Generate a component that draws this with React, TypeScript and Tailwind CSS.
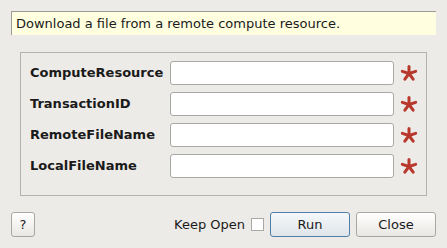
import React from "react";

const FIELDS = ["ComputeResource", "TransactionID", "RemoteFileName", "LocalFileName"];

function Required() {
  // five-armed red asterisk marking a required field
  const arms = [-90, -18, 54, 126, 198];
  return (
    <svg width="18" height="18" viewBox="0 0 18 18" className="shrink-0">
      {arms.map((a) => {
        const r = (a * Math.PI) / 180;
        return (
          <line
            key={a}
            x1="9"
            y1="9.5"
            x2={9 + 7 * Math.cos(r)}
            y2={9.5 + 7 * Math.sin(r)}
            stroke="#b8382c"
            strokeWidth="3"
            strokeLinecap="round"
          />
        );
      })}
    </svg>
  );
}

export default function App() {
  return (
    <div className="w-[447px] h-[248px] bg-[#edebe7] text-[13px] text-[#1a1a1a] font-['DejaVu_Sans',sans-serif] overflow-hidden">
      <div className="pt-[11px] px-[11px]">
        {/* Description */}
        <div className="h-[24px] bg-[#ffffe0] border-t border-l border-[#9c9a96] flex items-center pl-[4px]">
          Download a file from a remote compute resource.
        </div>

        {/* Parameters */}
        <div className="mt-[17px] ml-[9px] mr-[9px] h-[144px] border border-[#b5b2ad] pt-[8px] pl-[9px] flex flex-col gap-[7px]">
          {FIELDS.map((f) => (
            <div key={f} className="flex items-center h-[24px]">
              <span className="w-[140px] font-bold">{f}</span>
              <input className="w-[224px] h-[24px] bg-white border border-[#aaa8a4] rounded-[3px] outline-none px-1" />
              <span className="ml-[6px]">
                <Required />
              </span>
            </div>
          ))}
        </div>

        {/* Buttons */}
        <div className="mt-[16px] flex items-center h-[25px]">
          <button className="w-[24px] h-[25px] rounded-[3px] border border-[#a9a7a3] bg-gradient-to-b from-white to-[#e9e7e3] text-[13px]">
            ?
          </button>
          <span className="ml-auto">Keep Open</span>
          <span className="ml-[6px] w-[13px] h-[13px] bg-white border border-[#aaa8a4]"></span>
          <button className="ml-[6px] w-[80px] h-[25px] rounded-[3px] border border-[#4f7fa8] bg-gradient-to-b from-[#f6f8fa] to-[#dfe5ea]">
            Run
          </button>
          <button className="ml-[6px] w-[80px] h-[25px] rounded-[3px] border border-[#a9a7a3] bg-gradient-to-b from-white to-[#e9e7e3]">
            Close
          </button>
        </div>
      </div>
    </div>
  );
}
